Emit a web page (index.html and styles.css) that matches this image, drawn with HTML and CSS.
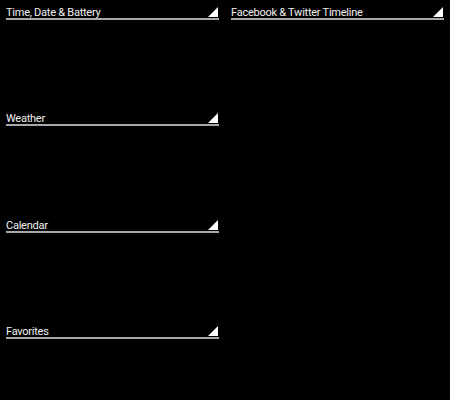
FILE: index.html
```html
<!DOCTYPE html>
<html>
<head>
<meta charset="utf-8">
<link rel="stylesheet" href="styles.css">
</head>
<body>
<div class="board">
  <div class="column">
    <section class="panel">
      <div class="header"><span class="title">Time, Date &amp; Battery</span><svg class="corner" width="10" height="10" viewBox="0 0 10 10"><polygon points="10,0 10,10 0,10" fill="#fff"/></svg></div>
    </section>
    <section class="panel">
      <div class="header"><span class="title">Weather</span><svg class="corner" width="10" height="10" viewBox="0 0 10 10"><polygon points="10,0 10,10 0,10" fill="#fff"/></svg></div>
    </section>
    <section class="panel">
      <div class="header"><span class="title">Calendar</span><svg class="corner" width="10" height="10" viewBox="0 0 10 10"><polygon points="10,0 10,10 0,10" fill="#fff"/></svg></div>
    </section>
    <section class="panel">
      <div class="header"><span class="title">Favorites</span><svg class="corner" width="10" height="10" viewBox="0 0 10 10"><polygon points="10,0 10,10 0,10" fill="#fff"/></svg></div>
    </section>
  </div>
  <div class="column">
    <section class="panel">
      <div class="header"><span class="title">Facebook &amp; Twitter Timeline</span><svg class="corner" width="10" height="10" viewBox="0 0 10 10"><polygon points="10,0 10,10 0,10" fill="#fff"/></svg></div>
    </section>
  </div>
</div>
</body>
</html>
```
FILE: styles.css
```css
html, body {
  margin: 0;
  padding: 0;
  background: #000;
}
.board {
  display: grid;
  grid-template-columns: 213px 213px;
  column-gap: 12px;
  padding: 0 6px;
  height: 400px;
  overflow: hidden;
}
.column {
  display: flex;
  flex-direction: column;
}
.panel {
  height: 106.33px;
  flex-shrink: 0;
}
.header {
  display: flex;
  justify-content: space-between;
  align-items: flex-end;
  padding-top: 7px;
  border-bottom: 2px solid #a8a8a8;
}
.title {
  font-family: Roboto, "Noto Sans", sans-serif;
  font-size: 11px;
  line-height: 11px;
  letter-spacing: -0.25px;
  color: #f0f0f0;
}
.corner {
  display: block;
  margin-right: 1px;
  margin-bottom: 1px;
}
```
